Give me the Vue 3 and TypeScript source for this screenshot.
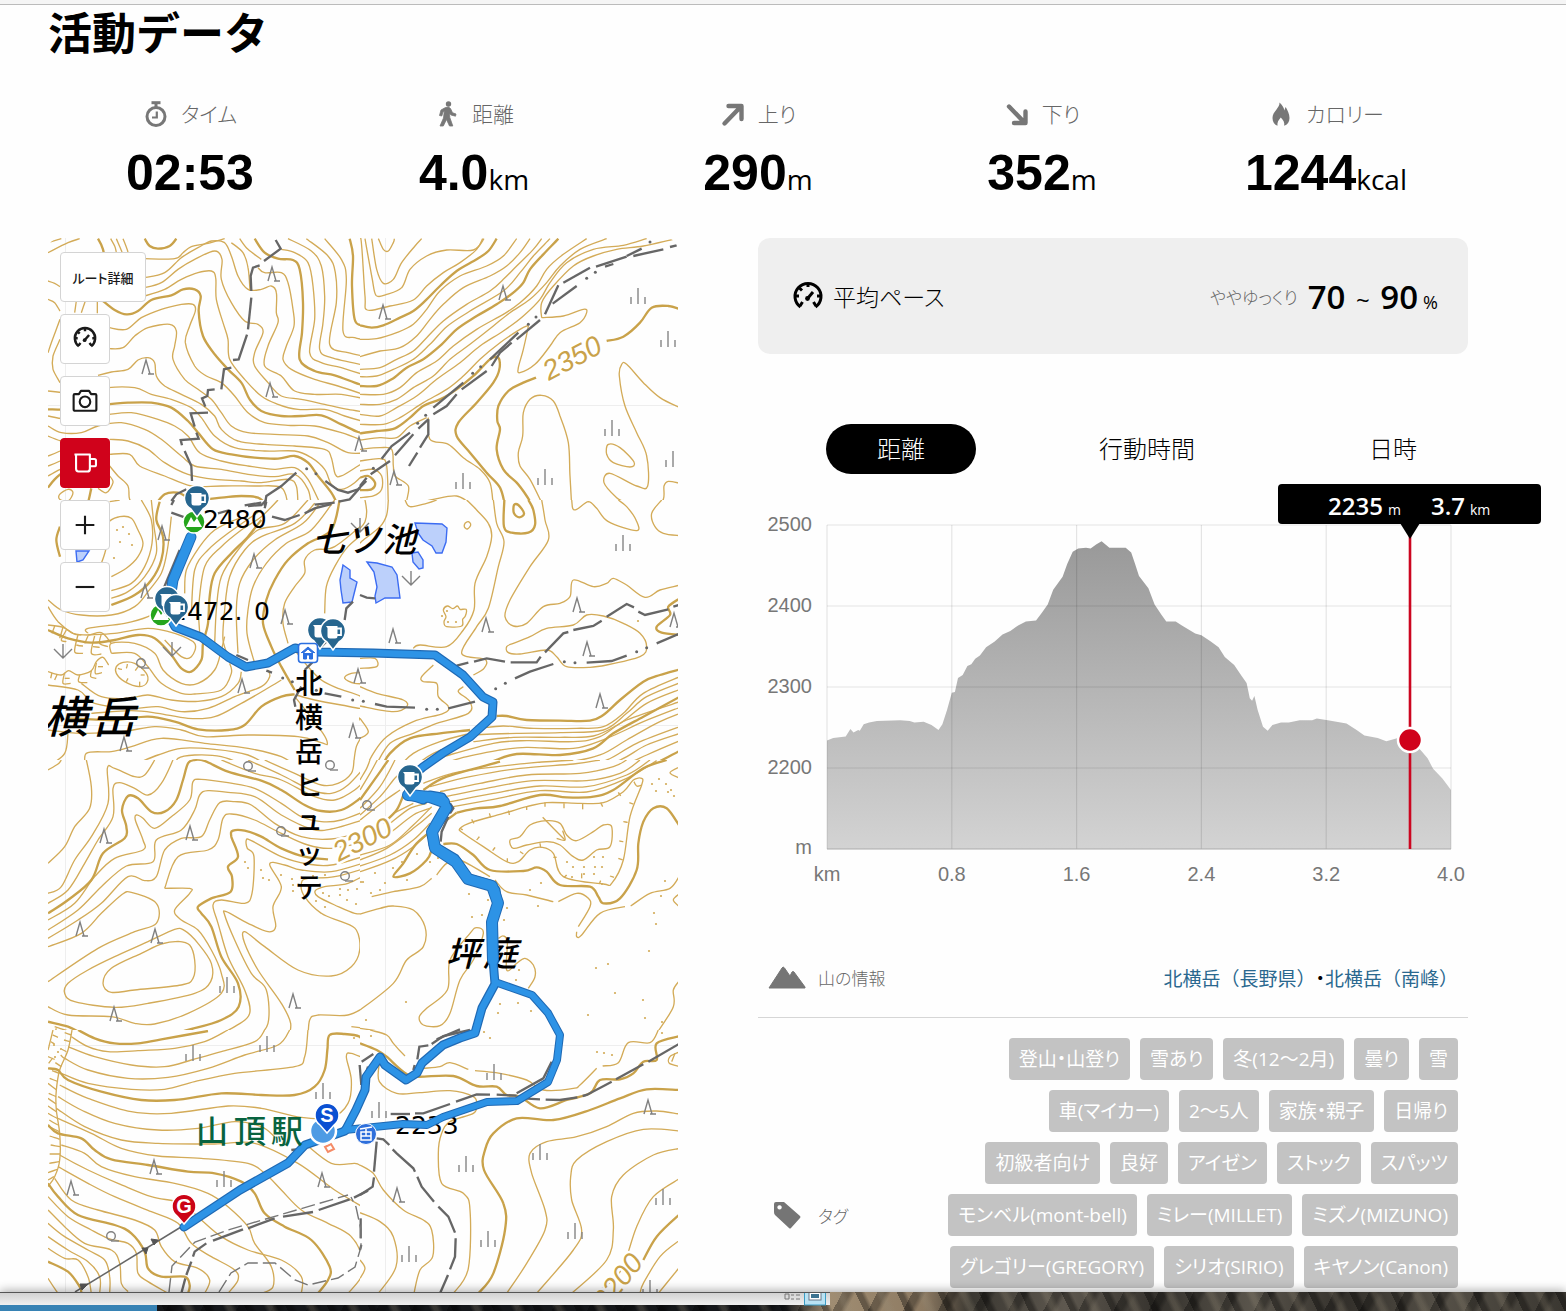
<script setup lang="ts">
import { ref } from 'vue'

interface Tile {
  x: number
  y: number
  w: number
  h: number
  bold: string[]
  thin: string[]
  trail: string[]
  dots: string
}

type Pt = [number, number]

function parse(s: string): Pt[] {
  return s.replace('z', '').trim().split(/\s+/).map((p) => p.split(',').map(Number) as Pt)
}

// Turns a point list into a smooth curve; a trailing "z" closes it.
function smooth(s: string): string {
  const closed = s.endsWith('z')
  const p = parse(s)
  const n = p.length
  const at = (i: number): Pt => (closed ? p[(i + n) % n] : p[Math.max(0, Math.min(n - 1, i))])
  let d = `M${p[0][0]} ${p[0][1]}`
  const last = closed ? n : n - 1
  for (let i = 0; i < last; i++) {
    const [a, b, c, e] = [at(i - 1), at(i), at(i + 1), at(i + 2)]
    const r = (v: number) => Math.round(v)
    d += `C${r(b[0] + (c[0] - a[0]) / 6)} ${r(b[1] + (c[1] - a[1]) / 6)} ${r(c[0] - (e[0] - b[0]) / 6)} ${r(c[1] - (e[1] - b[1]) / 6)} ${c[0]} ${c[1]}`
  }
  return closed ? d + 'Z' : d
}

// Map tiles: three drawing units per map pixel, origin in map pixels.
const tiles: Tile[] = [
  {
    x: 48, y: 236, w: 936, h: 792,
    bold: [
      '150,8 165,40 172,90', '165,195 200,222 235,235 270,225 310,192 370,178 405,160 440,160 458,180 452,225 465,300 500,355 540,400 580,440 605,490 640,525 700,540 760,540 820,538 880,565 930,588 960,590',
      '290,8 305,30 330,38 365,30 385,8',
      '620,8 650,50 690,68 735,72 755,100 765,200 762,290 755,370 800,405 860,418 920,440 960,452',
      '905,8 915,60 912,150 920,250 940,268 960,272',
      '0,520 70,520 150,508 240,500 310,500 370,515 420,555 450,590 495,640 550,655 620,665 690,668 740,660 780,680 810,720 850,770 870,810',
      '320,810 350,775 390,770 440,790 520,785 580,780 630,785 660,810',
      '0,755 20,730 40,712', '130,757 120,800 110,810',
    ],
    thin: [
      '188,8 200,30 205,48', '225,8 240,48', '205,8 222,48', '290,68 380,68 405,50 430,32 480,22 530,8',
      '290,125 350,110 400,65 450,35 490,15 530,20 550,60 570,120 600,160 640,160 670,150 685,170 685,230 690,260 660,330 650,390 700,420 740,465 800,475 880,475 960,490',
      '290,155 340,140 390,100 440,70 500,45 522,70 520,130 550,200 590,255 630,265 645,290 620,350 620,390 660,440 700,480 760,490 830,505 900,520 960,530',
      '290,180 350,160 400,130 450,110 490,105 503,125 505,190 525,260 540,310 545,370 590,430 640,480 690,505 750,520 830,520 890,540 960,560',
      '185,275 235,280 280,245 340,220 400,205 435,205 442,225 425,270 412,320 440,390 475,420 520,440 560,480 600,530 650,560 720,568 800,570 880,590 960,620',
      '185,338 225,335 260,300 300,275 365,265 385,285 380,330 375,370 410,430 450,460 490,490 520,530 550,570 600,590 680,595 780,600 840,620 900,650 960,650',
      '150,418 190,408 240,400 270,372 300,365 320,380 325,420 350,450 400,475 460,505 500,540 520,580 570,615 650,625 740,630 830,640 850,665 862,715 880,720 930,690 960,670',
      '0,465 50,470 100,472 180,455 260,455 310,475 370,490 430,515 460,545 500,600 560,635 650,645 740,645 790,665 830,700 850,745 880,760 920,740 960,700',
      '185,535 250,530 330,550 380,570 420,600 455,650 520,675 600,690 680,700 740,695 780,730 820,810',
      '0,570 40,590 100,590 150,570 220,560 290,580 340,610 400,660 440,690 520,700 600,715 680,722 740,715 780,760 790,810',
      '0,540 50,548 100,535', '0,600 40,615',
      '185,610 240,615 300,640 350,680 420,715 500,730 580,735 640,740 720,730 745,750 750,810',
      '185,655 245,655 275,690 350,720 430,750 520,750 620,750 700,755 720,810',
      '185,690 210,720 240,750 245,790 270,810',
      '630,95 650,110 700,110 720,140 735,220 738,270 715,330 705,370 730,400 800,430 870,450 960,480',
      '700,40 740,50 780,80 795,150 800,250 785,350 820,380 880,395 960,420',
      '720,8 790,45 820,90 830,180 825,260 815,340 850,365 960,390',
      '775,8 840,60 862,110 865,200 845,325 900,350 960,362',
      '830,8 880,70 895,130 885,285 920,305 960,312', '940,8 948,170 960,230',
      '550,20 585,50 600,95 606,165', '575,8 600,40 640,70', '0,20 40,8', '0,50 60,20 95,8',
      '0,135 20,142 36,152', '0,190 20,200 36,225', '36,310 15,360 15,400 36,440', '36,250 10,320 0,350',
      '85,195 80,230', '112,195 100,230', '148,195 148,232', '0,660 36,645', '0,690 36,675', '0,720 36,700',
      '35,775 60,760 75,770 60,795 35,790z', '150,757 175,770 195,740 185,720',
    ],
    trail: [
      '683,12 698,38 648,75', '635,88 615,95 608,120 610,165', '610,185 600,280', '597,296 572,370 555,372',
      '550,395 528,400 520,460', '500,460 480,462 478,480 462,487 472,512', '480,530 428,532 440,572',
      '445,590 452,608 398,612 402,628', '410,645 430,690 432,735', '415,760 385,775 370,795',
      '745,710 700,750 655,780 650,810', '832,735 870,762 900,770 930,760 955,735', '800,806 860,800', '872,797 905,790 936,755', '590,808 640,800',
    ],
    dots: '776,698 804,713',
  },
  {
    x: 360, y: 236, w: 960, h: 792,
    bold: [
      '0,268 35,275 70,268 120,245 160,225 200,190 240,150 290,105 350,70 385,45 410,8',
      '0,450 50,450 95,430 140,395 190,370 240,330 290,280 350,240 410,205 460,170 490,140 510,100 550,55 595,8',
      '0,592 50,585 105,577 150,545 190,510 240,490 290,460 340,420 390,370 415,365 418,400 400,440 350,500 295,560 290,600 330,650 380,710 420,755 435,810',
      '528,425 490,440 445,465 415,510 412,555 420,580 410,640 430,700 470,740 500,780 518,810',
      '740,315 790,302 840,260 875,215 925,210 960,220',
      '0,725 25,720 45,740 35,760 0,762', '455,810 470,804 485,812',
    ],
    thin: [
      '0,0 5,30 15,180 22,222 90,210 160,192 200,150 250,110 300,80 350,40 368,8',
      '15,8 35,120 48,178 80,175 125,155 150,100 200,60 260,42 340,42 372,8',
      '35,8 50,100 70,142 100,130 125,80 165,30 185,8',
      '55,8 70,40 85,45 100,20 103,8',
      '0,310 50,308 110,290 160,265 200,220 240,165 300,120 380,90 430,60 470,8',
      '0,362 60,345 120,335 170,300 210,250 250,205 310,155 390,120 440,90 480,50 510,8',
      '0,400 60,395 110,370 160,345 200,305 250,255 320,205 390,165 430,130 470,90 520,40 545,8',
      '0,422 50,420 100,400 160,370 210,325 260,272 330,225 430,165 480,110 520,60 570,8',
      '0,475 70,475 120,455 170,410 230,375 280,330 350,280 430,235 480,200 530,150 560,100 610,55 680,8',
      '0,505 60,505 110,490 160,455 220,420 270,370 330,325 400,270 450,230 510,190 560,140 600,90 660,40 740,8',
      '0,535 60,540 110,515 170,480 230,430 300,380 360,330 430,285 490,240 540,190 570,140 620,80 700,40 790,28 860,8',
      '0,565 70,565 120,545 190,500 260,460 310,420 360,370 420,320 480,280 505,268',
      '0,612 60,605 110,605 150,570 200,545',
      '545,245 545,200 580,150 640,90 700,60 770,40 850,30 940,10',
      '545,245 610,240 670,220 680,230 660,260 600,290 570,330 525,385 480,410 475,395 490,340 505,270',
      '205,545 210,610 265,625 310,665 360,700 390,740 400,810',
      '0,640 60,635 95,640 100,690 105,720 145,750 140,800 160,805 220,790 290,780 340,810',
      '0,675 60,668 80,690 85,810', '0,705 40,700 65,720 65,760 40,780 0,785',
      '635,810 630,720 625,620 600,540 580,495 545,478 510,490 490,530 488,600 475,650 480,690 510,730 550,810',
      '960,515 900,485 850,440 800,385 785,385 778,420 795,510 830,590 860,660 863,750 830,750 750,712 732,740 770,785 800,800 820,810',
      '745,625 780,635 822,678 810,693 760,680 740,655z',
      '660,810 685,797 705,810', '960,742 925,736 912,750 910,790 880,810',
    ],
    trail: [
      '0,750 20,725', '32,715 90,675', '105,658 160,595', '175,578 205,550', '220,535 260,510 290,475', '305,460 380,405', '395,390 420,350 455,320', '470,310 540,252',
      '65,668 95,630 150,590', '220,515 310,440', '390,370 475,290', '205,550 205,595 180,635', '172,650 147,690',
      '555,235 595,148', '578,203 650,150', '610,140 690,95', '708,92 800,62', '820,60 910,40', '930,33 950,28', '800,60 845,38', '735,92 760,84',
    ],
    dots: '173,562 197,538 338,412 362,392 505,265 528,243 680,127 706,109 870,18 40,697',
  },
  {
    x: 48, y: 500, w: 936, h: 780,
    bold: [
      '36,80 25,120 36,170', '335,5 325,60 345,110 340,180 310,240 260,285 190,315',
      '640,60 600,110 550,160 500,220 485,290 480,370 465,430 460,480 430,515 400,505 370,465 320,415 270,405 200,420 130,428 60,415 0,390',
      '875,0 850,90 780,130 720,180 680,240 655,300 645,370 670,440 700,500 740,570',
      '60,655 200,660 300,650 380,665 450,688 540,690 590,675 640,620 700,590 740,583',
      '410,810 430,783 465,783 520,800 545,810',
    ],
    thin: [
      '160,190 175,140 180,70 215,50 250,55 270,90 285,130 270,170 235,205 190,230', '185,5 215,0',
      '280,0 310,60 312,130 290,200 250,250 190,272', '310,0 318,80 325,160 290,230 240,275 190,295',
      '370,50 358,150 340,220 300,275 260,320 190,345 100,345 40,330 0,300',
      '0,320 30,365 75,400 100,405', '120,400 120,385 230,370 300,350 330,330',
      '120,405 200,400 300,385 380,400 440,430 430,470 400,470 350,420',
      '410,280 415,210 455,140 500,90 560,60 600,50', '430,340 440,210 480,150 540,100 640,30',
      '455,400 452,320 470,200 520,140 580,90 640,50 690,0',
      '500,430 505,330 520,230 570,150 630,90 710,70 780,0',
      '545,480 525,420 530,330 545,230 590,150 640,110 740,70 800,10',
      '570,460 565,330 575,250 615,180 680,120 765,70 815,10',
      '620,490 597,400 600,330 615,260 655,190 715,130 790,90 860,0',
      '720,430 705,370 710,310 740,260 770,220 770,180 800,150 860,140 960,60',
      '830,340 835,260 860,200 900,140 960,90',
      '190,460 190,430 260,430 320,460 345,510 400,550 450,550 500,510 520,450 530,410',
      '190,460 260,460 300,500 340,550 400,580 440,582 520,570 550,520 545,490',
      '100,550 160,590 240,595 300,585 370,600 450,604 520,590 570,550 580,515',
      '0,555 90,570 140,610 250,625 330,620 400,635 480,625 560,590 640,560 665,530 660,510',
      '130,640 250,632 330,640 420,655 500,650 580,610 650,570 700,540',
      '0,690 100,700 220,695 320,680 400,690 470,710 600,705 750,710 820,728 838,732 825,700 780,640 740,590',
      '115,810 115,760 190,755 250,740 340,715 470,730 600,745 700,770 760,810',
      '180,810 240,800 330,765 400,745 500,748 600,765 680,810',
      '380,810 390,775 440,765 520,770 600,800 620,810', '60,700 50,760 0,800',
      '205,500 225,487 260,490 295,520 298,545 275,560 230,545 205,520z',
      '740,450 780,500 820,540 870,565 940,590 948,612 940,625 880,615 800,600 745,585',
      '960,518 910,520 890,535 920,550 960,550', '960,650 935,655 950,690 925,740 915,810',
      '0,375 45,382 75,400 120,405 160,398 190,430', '45,382 35,415', '20,378 12,400', '90,404 80,455 105,460', '85,435 105,438', '120,408 110,430', '140,408 130,460 160,462', '135,440 155,442', '160,402 155,430 180,440', '55,390 40,420 55,425',
      '0,515 40,525 62,512 90,525 130,512 145,485 165,472 182,495', '50,518 45,550 68,550', '50,535 65,535', '95,525 92,545 118,548', '130,512 128,530 145,535', '145,488 142,520 162,518', '150,500 165,500', '12,518 8,535', '28,522 20,540',
      '238,492 235,505', '270,500 262,512', '290,525 278,525', '210,505 222,508', '235,545 240,535', '275,558 275,545',
    ],
    trail: [
      '370,15 378,0', '370,38 410,52', '510,40 545,30', '600,18 640,15 655,0', '655,5 650,25', '672,50 710,60 755,45', '770,40 800,25 850,12', '395,150 345,270',
      '890,360 895,325 915,305', '742,620 738,600 760,560', '770,510 790,490 800,480', '655,512 672,518', '565,465 600,480', '830,580 880,590', '820,440 835,425',
    ],
    dots: '704,534 733,545 805,571 914,600',
  },
  {
    x: 360, y: 500, w: 960, h: 780,
    bold: [
      '433,0 432,80 455,98 505,98 525,75 520,30 505,0', '462,15 475,15 492,40 478,52 462,40z',
      '410,648 440,648 500,660 600,662 690,662 730,645 780,600 850,545 900,525 960,508',
      '960,295 925,320 930,345 890,380 905,398 960,405',
      '290,810 380,790 470,762 600,765 700,745 760,700 850,650 960,590',
      '60,810 90,760 150,715 240,700 330,690', '850,810 960,752',
    ],
    thin: [
      '15,0 20,35 15,65 0,85', '85,0 80,45 60,80 10,120 0,130', '135,0 150,20 200,10 230,0',
      '320,0 350,30 385,70 395,110 380,170 345,250 342,330 310,390 260,440 180,435 160,445',
      '400,0 410,70 432,125 415,200 385,325 350,380 305,460 375,478 372,505 340,525',
      '545,0 555,60 565,120 510,200 450,300 435,350 460,378 500,370 550,320 600,310 630,290 640,240 700,260 740,250 760,235 800,255 855,292 900,270 960,255',
      '635,0 638,25 650,28 685,5 710,25 745,65 830,92 828,60 800,20 775,0',
      '905,0 875,40 885,80 910,100 960,107', '315,70 325,65 332,75 322,87 313,80z',
      '250,330 262,318 278,326 292,318 300,328 318,328 316,348 308,358 305,378 260,380 252,365 258,350z',
      '440,440 460,430 510,410 560,385 640,375 680,345 730,348 790,370 840,400 860,440 840,470 740,495 690,502 620,500 590,470 560,450 480,462 445,458z',
      '0,475 45,475 50,500 0,505', '220,495 185,530 190,545 230,550 235,590 265,620 250,640 160,665 80,710 40,760 15,810',
      '310,560 295,575 330,605 325,640 230,670 160,700 90,730 40,810', '0,560 50,580 130,600 140,620 100,635 0,618', '0,655 25,695 0,715',
      '360,685 430,678 520,685 650,685 730,680 790,640 850,580 960,530',
      '330,705 470,700 600,698 730,690 800,640 860,590 960,548',
      '340,725 460,712 600,712 700,708 780,670 860,610 960,568',
      '250,770 400,730 500,722 640,725 720,710 800,660 960,605',
      '200,810 300,775 420,750 500,742 640,745 740,715 850,665 960,622',
      '400,810 500,785 620,785 720,765 800,720 900,665 960,640',
      '520,810 640,805 740,780 830,730 960,680', '680,810 780,780 860,735 960,700', '760,810 860,765 960,722', '900,810 960,785',
      '110,810 160,760 240,725 330,700', '150,810 220,760 330,720',
    ],
    trail: [
      '290,497 325,488', '342,485 380,475 435,485', '452,487 530,487 542,470', '555,457 610,400 625,396', '640,390 700,378 725,362', '740,350 800,312 822,322', '835,335 855,345 925,328', '940,320 960,314',
      '465,535 510,515 580,492', '680,488 755,483 800,467', '890,430 960,400', '45,612 80,620 165,623', '265,625 345,605', '0,285 20,293 45,295',
    ],
    dots: '407,566 436,550 613,485 645,488 830,455 860,443 200,628 232,628 10,604',
  },
  {
    x: 48, y: 760, w: 936, h: 810,
    bold: [
      '0,460 60,420 130,360 165,280 230,235 235,200 222,150 240,108 270,115 310,155 350,155 385,120 405,60 420,10 440,0 470,3 540,35 640,62 700,90 770,135 820,153 880,150 930,120 960,90',
      '840,298 770,290 700,265 640,230 590,212 555,212 550,230 570,290 540,320 552,350 548,395 490,415 450,440 460,460 490,500 520,590 570,670 572,740 520,780 420,810 300,838',
      '0,785 60,800 130,830 240,840 300,838', '840,840 850,822 930,825',
    ],
    thin: [
      '115,0 130,80 125,145 80,200 50,260 0,310',
      '0,400 40,380 80,300 130,230 180,130 178,25 200,25 260,50 290,45 320,0',
      '0,430 60,390 110,310 150,240 195,170 195,85 215,68 260,85 300,105 340,70 375,0',
      '0,480 80,430 140,350 200,295 285,270 285,240 262,180 265,165 285,175 320,205 370,170 425,120 435,65 460,58 540,68 620,85 700,130 760,170 820,185 880,180 960,150',
      '0,510 90,450 160,380 235,318 315,305 325,240 400,210 440,150 455,105 480,92 540,97 620,110 700,165 790,207 850,207 960,175',
      '0,535 90,480 160,430 240,350 290,362 325,350 350,270 400,235 460,230 485,180 515,128 560,125 610,135 680,190 760,230 850,237 960,210',
      '0,560 100,520 160,460 220,405 250,397 325,430 325,490 260,515 150,565 0,665',
      '350,385 390,290 480,270 510,240 525,175 550,162 620,180 700,220 780,255 850,265 960,245',
      '350,385 425,385 425,400 380,450 400,480 450,510 490,570 520,640 520,700 420,760 320,792 260,790 190,770 60,765 0,740',
      '380,508 410,512 450,550 490,610 488,665 440,700 300,730 200,742 80,725 50,700 60,670 120,630 200,590 300,545z',
      '390,544 425,555 440,600 435,655 400,675 260,690 190,697 165,670 190,625 280,580 340,552z',
      '960,285 850,315 780,312 700,290 610,242 595,240 598,265 618,290 612,400 590,430 520,420 495,435 510,490 540,590 590,690 605,760 560,800 480,840',
      '960,305 850,335 760,330 710,315 665,312 700,380 675,440 683,500 660,515 600,490 535,455 530,465 560,540 610,640 655,690 660,790 620,840',
      '720,840 728,790 700,730 630,630 590,550 590,515 650,560 750,630 850,648 910,620 935,570 925,510 880,485 820,460 770,410 760,370 780,355 860,350 960,322',
      '960,460 920,460 860,435 810,410 802,392 830,380 900,370 960,340',
      '780,840 785,780 810,765 900,765 960,735', '910,800 960,806', '0,30 30,12 40,0',
      '520,0 620,40 700,60 800,110 860,120 920,90 960,50', '600,0 700,45 790,90 850,100 900,75 960,10', '650,0 740,40 820,75 870,70 910,40 918,0',
      '20,800 70,815', '15,840 25,805', '70,840 66,812', '35,810 38,840', '50,812 48,835',
    ],
    trail: [],
    dots: '',
  },
  {
    x: 360, y: 760, w: 960, h: 810,
    bold: [
      '0,120 50,50 85,0', '70,190 110,150 130,105', '190,90 260,50 420,5',
      '290,158 350,145 420,138 540,105 620,112 700,110 760,90 850,25 920,0',
      '290,158 260,180 230,200 170,250 130,310 100,350 150,340 200,300 215,270',
      '250,252 290,252 340,285 390,330 490,333 530,322 560,335 600,375 690,380 715,410 730,430 780,415 830,330 835,250 850,185 880,145 920,145 960,200',
    ],
    thin: [
      '0,60 20,25 30,0', '0,90 30,40 52,0', '0,145 60,80 105,0', '0,165 60,110 100,60 120,40', '0,180 70,125 120,90', '100,160 160,130',
      '0,285 90,255 160,195 215,140', '0,300 80,265 160,205 215,160', '0,318 90,285 160,240 210,190', '0,335 90,302 160,260 205,220', '90,190 150,145 200,130', '95,215 160,165 210,145',
      '190,70 300,35 500,10 640,0', '210,80 330,50 480,25 640,12 720,0', '240,95 360,70 500,45 660,40 760,20 800,0', '255,110 380,85 520,62 680,62 780,40 840,0', '270,125 400,100 540,78 680,80 800,45 870,0', '280,140 400,118 540,92 680,96 800,55 890,2',
      '300,205 340,185 430,160 500,140 560,128 660,130 730,128 790,95 820,60 845,55 845,75 810,170 790,300 755,370 730,372 610,350 580,280 545,262 510,270 475,305 440,305 370,260 310,220z',
      '822,65 830,78 845,75', '450,240 480,230 510,195 560,182 600,190 620,225 650,242 700,215 730,195 755,200 750,260 710,270 670,300 640,290 600,255 560,245 500,255 460,265z',
      '548,172 615,240', '590,235 615,240 608,212',
      '335,178 342,190', '388,160 392,172', '445,152 448,165', '500,138 500,150', '555,127 555,140', '612,130 612,145', '668,130 668,148', '722,128 728,140', '775,97 782,108', '808,128 820,132', '790,185 803,187', '778,243 790,245', '775,295 788,300', '750,348 762,352', '722,362 718,372', '665,340 665,355', '620,345 612,352', '590,292 580,292', '540,250 542,262', '480,275 490,282', '442,295 442,305', '405,262 398,272', '358,230 350,240', '308,210 300,205',
      '35,410 100,395 180,380 215,355', '230,345 260,310 300,300 390,350', '405,360 440,395 500,405 580,425',
      '595,425 650,400 685,415 690,440 655,500', '650,515 650,530 665,525 720,460 795,440', '812,438 870,400 930,385 960,345',
      '0,462 60,445 100,438 160,450 195,500 190,560 140,600 100,670 0,750',
      '240,797 270,760 300,660 340,600 370,520 350,503 330,520 270,600 262,690 200,745 178,770 190,795z',
      '415,535 430,528 442,545 440,630 470,610 495,595 520,615 525,650 505,685', '960,400 940,420 960,442', '960,20 930,38 960,55',
      '960,660 940,690 940,740 890,820', '0,805 60,815 100,838',
    ],
    trail: ['265,170 245,215 242,245', '270,130 280,145 270,160', '230,838 300,808', '318,815 340,820'],
    dots: '',
  },
  {
    x: 48, y: 1030, w: 936, h: 800,
    bold: [
      '90,0 140,25 200,40 270,40 340,28 480,3',
      '0,115 30,120 60,150 160,185 280,210 380,210 520,190 640,195 740,195 800,170 830,120 838,60 845,15 890,12 935,20 945,45 960,50',
      '0,285 30,310 100,325 140,360 190,388 300,405 420,425 500,430 580,455 620,490 650,550 710,590 790,630 845,710 840,750 810,790',
      '0,460 30,500 90,555 200,585 250,610 290,665 300,715 340,740 410,740 425,765 420,790',
      '0,695 60,725 95,770 100,790',
    ],
    thin: [
      '70,20 120,50 180,65 270,62 380,55 470,35 540,0', '60,50 140,80 250,105 350,110 430,90 520,65 620,35 650,0',
      '50,85 120,120 240,145 360,142 480,115 590,75 690,45 725,0', '40,130 120,160 250,178 350,178 440,155 560,130 740,110 770,80 780,0',
      '35,165 120,205 250,245 370,250 540,228 640,235 760,262 850,262 900,220 910,150 895,80 910,70 960,90',
      '30,200 100,240 200,280 330,300 450,295 560,275 640,290 680,320', '25,235 110,290 220,330 330,340 500,342 620,340 750,400 860,480 960,540',
      '30,265 130,310 220,355 330,378 460,385 600,400 650,430 700,480 760,540 840,580 910,620 945,690 940,740 900,790',
      '40,345 110,370 160,410 260,440 380,460 480,490 540,530 600,590 620,640 670,710 675,770 640,790',
      '35,375 120,420 210,460 310,500 400,520 460,570 520,620 600,660 700,690 760,740 760,790',
      '30,410 120,460 200,500 310,545 390,580 430,640 490,680 560,720 570,750 540,790',
      '20,445 70,510 150,540 260,570 320,600 340,650 380,695 450,715 485,750 470,790',
      '0,500 60,560 130,600 180,625 240,640 265,670 270,730 300,755 360,790',
      '0,540 50,590 110,640 190,660 215,700 220,760 240,785', '0,580 50,620 120,660 170,690 185,740 185,790',
      '0,620 60,660 120,695 155,740 155,790', '0,655 50,685 90,690 120,740 130,790', '0,745 30,790', '770,340 850,400 920,400 936,406',
      '72,0 60,60 35,120 25,180 25,240 35,310 35,390 20,440 0,470', '15,0 5,40 0,60',
      '55,65 42,58', '48,85 38,75', '40,110 22,98', '35,130 12,122', '30,155 5,145', '26,180 0,160', '24,200 2,190', '24,222 0,205', '25,245 0,228', '28,265 0,250', '30,285 4,270', '34,305 8,292', '35,328 5,318', '36,350 8,345', '36,372 5,372', '34,395 4,400', '28,418 0,428', '18,440 0,450', '70,15 50,8', '66,35 48,30', '14,15 30,22', '8,35 20,42', '0,80 20,88', '2,100 14,84',
    ],
    trail: ['950,145 960,110', '935,105 940,165', '730,360 745,358', '400,790 412,745', '415,735 430,695', '435,680 440,665 475,640', '495,632 585,598', '600,595 680,565', '705,560 795,546', '812,540 905,508', '918,503 960,482'],
    dots: '',
  },
  {
    x: 360, y: 1030, w: 960, h: 800,
    bold: [
      '0,40 50,60 80,80 130,125 170,140 280,138 350,168 410,170 440,195 480,200 540,235 620,210 690,190 720,150 780,148 820,130 850,95 890,90 890,40 960,18',
      '960,180 860,178 780,205 690,240 580,270 470,265 400,310 375,360 372,420 430,520 435,600 400,730 355,790',
      '850,690 890,620 960,552',
    ],
    thin: [
      '30,0 80,15 100,40 135,78', '190,115 240,110 270,98 325,118', '345,122 420,130 500,150 550,180 640,175 660,165 710,115', '728,108 775,98 805,38 870,38 895,0',
      '58,100 58,155 110,190 180,188 270,182 340,200 350,225 340,250 270,275 245,310 235,370 245,460 310,490 330,540 325,715 280,790',
      '960,252 890,243 820,250 740,290 650,320 560,335 510,370 515,430 555,540 555,600 500,700 440,790',
      '960,303 850,298 740,335 650,390 632,440 635,510 665,600 640,660 530,790',
      '960,355 880,375 790,435 755,500 760,600 740,690 635,790', '960,445 880,500 830,590 800,680 770,740 705,790',
      '960,630 900,680 850,760 840,790', '960,710 895,790',
      '0,405 40,430 70,480 130,540 190,570 215,600 218,680 180,720 162,790', '0,548 60,575 100,620 108,710 55,790', '0,690 15,715 0,745', '960,65 930,80 928,100 960,110', '945,70 935,95',
    ],
    trail: [
      '5,95 40,72', '92,252 150,252', '165,250 190,250 270,222', '288,215 350,193 390,194', '410,194 470,197', '490,205 540,208', '557,209 600,210 652,202', '668,198 680,195 755,155', '768,148 850,103', '865,95 960,40',
      '160,120 164,105', '172,88 178,50 205,46', '215,42 250,18 330,0', '470,190 550,145 575,95', '50,325 70,328 88,345', '98,358 110,370 160,415 165,425', '172,440 185,470 222,515', '235,530 265,560 285,608', '287,625 285,680 270,718', '264,735 240,790', '50,335 42,425', '42,442 38,470 0,495', '2,565 2,625', '4,645 0,660',
    ],
    dots: '',
  },
]

const ponds: string[] = [
  'M76 551L89 551L83 560L77 562Z',
  'M343 565L350 570L350 578L357 582L352 602L343 603L341 590L340 580Z',
  'M367 562L377 563L392 567L397 575L400 598L385 598L376 603L375 596L377 587L374 572Z',
  'M415 523L442 524L447 528L446 542L442 553L436 553L432 546L423 540L418 533Z',
  'M412 553L418 552L423 560L423 568L419 569L413 562Z',
]

const rubble: Pt[] = parse(
  '245,862 248,868 261,870 263,878 269,880 281,875 292,879 293,885 293,891 313,876 325,875 323,893 329,896 340,889 348,890 357,889 361,882 340,895 347,900 356,904 316,901 325,907 371,893 363,882 380,890 375,873 385,883 393,868 402,862 407,880 417,854 430,862 438,858 469,894 488,900 507,908 538,906 530,890 541,883 472,917 482,915 504,920 567,862 573,867 584,867 594,857 602,867 603,857 594,874 584,874 602,884 572,877 595,867 652,784 659,779 666,784 671,790 674,796 668,792 656,791 665,881 661,896 654,913 656,924 649,951 608,964 596,968 615,993 588,1015 643,1000 645,1018 500,1004 498,1013 516,980 519,970 518,1003 531,1011 406,1002 366,1020 354,1038 484,1032 490,1038 597,1052 604,1053 612,1055 662,1033 54,1045 58,1052 55,1057 61,1049 117,530 123,527 129,534 120,542 132,545 114,558 638,621 442,616 448,622 456,622 447,611 662,1022 371,1036',
)

const conifers: Pt[] = parse(
  '273,274 147,367 271,390 360,444 384,312 504,293 395,478 163,533 146,591 255,561 286,617 243,686 359,676 354,731 125,744 394,636 487,625 578,605 588,649 601,701 675,620 105,836 191,833 81,929 156,936 115,1014 294,1001 72,1188 155,1167 323,1180 649,1107 398,1195',
)
const grasses: Pt[] = parse(
  '638,296 668,339 612,428 673,459 463,481 545,477 623,543 227,985 193,1053 267,1044 323,1091 224,1179 494,1072 379,1110 466,1164 540,1152 663,1197 575,1231 488,1239 409,1254 650,1288',
)
const broadleaf: Pt[] = parse('141,663 248,766 330,765 281,831 345,876 367,805 111,1236')
const dwarfPines: Pt[] = parse('63,652 172,650 360,526 411,579')

const route =
  'M184 1227L240 1190L288 1163L305 1145L345 1131L356 1110L365 1090L366 1077L380 1057L385 1065L406 1080L417 1073L422 1063L443 1045L460 1038L475 1033L482 1008L495 984L492 947L492 920L498 903L496 890L490 884L468 878L455 858L433 845L432 830L448 808L442 797L430 795L423 800L408 795L410 778L423 767L443 753L470 737L492 717L493 702L483 697L463 675L435 655L373 653L315 652L295 648L268 663L246 667L228 657L201 637L175 627L165 608'
const loop =
  'M495 982L532 995L548 1013L560 1035L557 1060L548 1082L517 1101L487 1102L443 1117L427 1125L403 1124L345 1130'
const ascent = 'M169 606L173 580L191 537'
const widened = 'M408 795L430 797L444 802M446 808L432 832L435 848L456 862L468 879L492 886L498 903L492 922L493 960'

const cups: Pt[] = [[197, 499], [167, 600], [176, 608], [320, 631], [333, 632], [410, 778]]
const peaks: Pt[] = [[194, 522], [161, 615]]
const hut = ['北', '横', '岳', 'ヒ', 'ュ', 'ッ', 'テ']

// Elevation profile: distance in km, height in metres.
const profile: Pt[] = parse(
  '0,2234 .04,2237 .12,2239 .15,2248 .17,2244 .2,2247 .21,2246 .235,2254 .27,2256 .32,2258 .47,2259 .53,2258 .56,2256 .62,2257 .67,2253 .715,2247 .74,2254 .77,2272 .8,2293 .82,2294 .84,2311 .87,2315 .9,2326 .925,2328 .95,2335 .98,2339 1.02,2349 1.075,2356 1.125,2365 1.175,2369 1.225,2376 1.275,2381 1.34,2382 1.375,2391 1.415,2402 1.45,2420 1.51,2436 1.54,2452 1.575,2467 1.61,2471 1.66,2472 1.69,2471 1.725,2476 1.76,2480 1.81,2472 1.915,2472 1.95,2466 1.975,2452 2,2437 2.06,2422 2.1,2402 2.145,2389 2.175,2381 2.235,2381 2.275,2376 2.36,2366 2.4,2364 2.46,2356 2.51,2349 2.55,2337 2.61,2327 2.66,2313 2.69,2305 2.71,2286 2.725,2283 2.74,2289 2.76,2272 2.795,2251 2.825,2246 2.855,2253 2.91,2256 2.96,2256 3.03,2259 3.11,2259 3.14,2261 3.21,2259 3.33,2255 3.395,2247 3.445,2240 3.53,2237 3.585,2233 3.66,2237 3.74,2235 3.81,2221 3.85,2212 3.885,2199 3.945,2187 4,2173',
)
const px = (km: number) => 69 + (km * 624) / 4
const py = (m: number) => 51 + (2500 - m) * 0.81
const area = 'M69 375' + profile.map(([k, m]) => `L${px(k).toFixed(1)} ${py(m).toFixed(1)}`).join('') + 'L693 375Z'
const yTicks = [2500, 2400, 2300, 2200]
const xTicks = ['0.8', '1.6', '2.4', '3.2', '4.0']

const tabs = ['距離', '行動時間', '日時']
const active = ref(0)

const stats = [
  { icon: 'time', label: 'タイム', value: '02:53', unit: '' },
  { icon: 'walk', label: '距離', value: '4.0', unit: 'km' },
  { icon: 'up', label: '上り', value: '290', unit: 'm' },
  { icon: 'down', label: '下り', value: '352', unit: 'm' },
  { icon: 'fire', label: 'カロリー', value: '1244', unit: 'kcal' },
]

const tags = [
  '登山・山登り', '雪あり', '冬(12〜2月)', '曇り', '雪', '車(マイカー)', '2〜5人', '家族・親子', '日帰り',
  '初級者向け', '良好', 'アイゼン', 'ストック', 'スパッツ', 'モンベル(mont-bell)', 'ミレー(MILLET)', 'ミズノ(MIZUNO)',
  'グレゴリー(GREGORY)', 'シリオ(SIRIO)', 'キヤノン(Canon)',
]
</script>

<template>
  <div class="page">
    <div class="topbar"></div>
    <main class="content">
      <h1>活動データ</h1>
      <dl class="stats">
        <div v-for="s in stats" :key="s.label" class="stat">
          <dt>
            <svg class="stat-icon" viewBox="0 0 26 26" aria-hidden="true">
              <g v-if="s.icon === 'time'" fill="none" stroke="#777">
                <circle cx="13" cy="15.500" r="9" stroke-width="3" />
                <path d="M8.500 1.700H17.500" stroke-width="3" />
                <path d="M13 3V6" stroke-width="3" />
                <path d="M13.800 10.500V16.500H9" stroke-width="2.200" />
              </g>
              <g v-else-if="s.icon === 'walk'" fill="#777">
                <circle cx="14.500" cy="3" r="2.700" />
                <path d="M11.500 6.500L7 9L5.500 14.500L7.800 15L9 11L10.300 10.200L9.500 17L6 25H9.300L12.500 18.500L15.500 25H18.800L15.800 16.500L15.500 12L17 14L21.500 15.200L22 13L18.500 11.700L16.500 7.500L14.500 6Z" stroke="#777" stroke-width=".8" stroke-linejoin="round" />
              </g>
              <path v-else-if="s.icon === 'up'" d="M4.500 22.500L20.500 6M8.500 5H21.500V18" fill="none" stroke="#777" stroke-width="4.400" stroke-linejoin="round" stroke-linecap="round" />
              <path v-else-if="s.icon === 'down'" d="M5 5.500L20.500 21.500M10 22H21.500V10.500" fill="none" stroke="#777" stroke-width="4.400" stroke-linejoin="round" stroke-linecap="round" />
              <path v-else d="M11.500 1.500C12 7 4.500 10.500 4.500 17C4.500 21 6.500 23.800 9.500 24.800C9 21.500 10.500 19 12.800 16.500C15.300 19 16.800 21.500 16.200 24.800C19.500 23.800 21.500 21 21.500 17C21.500 12.500 19.500 9.500 17.700 6C17 7.200 16.700 8.300 16.500 9.500C15.800 6.500 14 3.500 11.500 1.500Z" fill="#777" />
            </svg>
            {{ s.label }}
          </dt>
          <dd>{{ s.value }}<small v-if="s.unit">{{ s.unit }}</small></dd>
        </div>
      </dl>

      <div class="columns">
        <section class="map" aria-label="地図">
          <svg class="map-canvas" viewBox="48 238 630 1054" preserveAspectRatio="xMidYMin slice">
            <defs>
              <clipPath v-for="(t, i) in tiles" :id="'tile' + i" :key="i"><rect :width="t.w" :height="t.h" /></clipPath>
              <g id="conifer" fill="none" stroke="#808080" stroke-width="1.400"><path d="M-5 7L-1 -7L3 7M1 7H7" /></g>
              <g id="grass" stroke="#858585" stroke-width="1.400"><path d="M-7 1V8M0 -8V8M7 1V8" /></g>
              <g id="broadleaf" fill="none" stroke="#808080" stroke-width="1.400"><circle r="4.300" /><path d="M0 5H8" /></g>
              <g id="dwarf" fill="none" stroke="#808080" stroke-width="1.400"><path d="M0 -8V6M-9 -3L0 6L9 -3" /></g>
              <g id="cup-pin">
                <path d="M0 18L-6 10A12.500 12.500 0 1 1 6 10Z" fill="#27668f" stroke="#fff" stroke-width="1.500" />
                <path d="M-7 -6H4.500V4Q4.500 6.500 2 6.500H-3Q-5.500 6.500 -5.500 4V-4Z" fill="#fff" />
                <path d="M4 -3.500H8V3H4" fill="none" stroke="#fff" stroke-width="1.800" />
              </g>
              <g id="peak-pin">
                <circle r="11" fill="#25a51c" stroke="#fff" stroke-width="1.500" />
                <path d="M-8 5L-3 -5L0 0L3 -4L8 5Z" fill="#fff" />
              </g>
            </defs>
            <rect x="48" y="238" width="630" height="1054" fill="#fefefe" />
            <path d="M65.500 238V1292M385.500 238V1292M48 405.500H678M48 725.500H678M48 1045.500H678" stroke="#eee" fill="none" />
            <g v-for="(t, n) in tiles" :key="n" :transform="`translate(${t.x} ${t.y}) scale(0.33333)`" :clip-path="`url(#tile${n})`" fill="none">
              <path v-for="(c, i) in t.thin" :key="'t' + i" :d="smooth(c)" class="thin" />
              <path v-for="(c, i) in t.bold" :key="'b' + i" :d="smooth(c)" class="bold" />
            </g>
            <g fill="#d3ab58"><circle v-for="([x, y], i) in rubble" :key="i" :cx="x" :cy="y" r="1.100" /></g>
            <g fill="#bcd0fb" stroke="#3c6cf2" stroke-width="1.400"><path v-for="p in ponds" :key="p" :d="p" /></g>
            <g v-for="t in tiles" :key="`p${t.x}-${t.y}`" :transform="`translate(${t.x} ${t.y}) scale(0.33333)`">
              <polyline v-for="(c, i) in t.trail" :key="i" :points="c" class="trail" />
              <template v-if="t.dots">
                <circle v-for="([x, y], i) in parse(t.dots)" :key="'d' + i" :cx="x" :cy="y" r="4.500" fill="#666" />
              </template>
            </g>
            <path d="M75 1292L181 1227" stroke="#666" stroke-width="1.500" />
            <path d="M151 1239L158 1240L154 1245ZM142 1248L148 1248L146 1254ZM80 1284L88 1284L82 1290Z" fill="#555" stroke="#555" />
            <g fill="none" stroke="#777" stroke-width="1.400" stroke-dasharray="14 5">
              <path d="M169 1292L172 1266L195 1242L228 1230L348 1195" />
              <path d="M219 1292L231 1273L248 1263L275 1263L295 1280L308 1285L338 1278L355 1267L361 1247L361 1230L356 1207L351 1197" />
            </g>
            <use v-for="([x, y], i) in conifers" :key="'c' + i" href="#conifer" :x="x" :y="y" />
            <use v-for="([x, y], i) in grasses" :key="'g' + i" href="#grass" :x="x" :y="y" />
            <use v-for="([x, y], i) in broadleaf" :key="'l' + i" href="#broadleaf" :x="x" :y="y" />
            <use v-for="([x, y], i) in dwarfPines" :key="'w' + i" href="#dwarf" :x="x" :y="y" />

            <g class="contour-label">
              <text transform="translate(549 381) rotate(-28)">2350</text>
              <text transform="translate(339 862) rotate(-27)">2300</text>
              <text transform="translate(606 1312) rotate(-52)">2200</text>
            </g>
            <g class="height-label">
              <text x="203" y="528">2480</text>
              <text x="171" y="620">2472.</text>
              <text x="254" y="620">0</text>
              <text x="395" y="1134">2233</text>
            </g>
            <g class="place">
              <text x="312" y="552">七</text><text x="346" y="552">ツ</text><text x="382" y="552">池</text>
              <text x="446" y="966">坪</text><text x="483" y="966">庭</text>
              <text class="big" x="44" y="733">横</text><text class="big" x="92" y="733">岳</text>
            </g>
            <g class="hut"><text v-for="(c, i) in hut" :key="i" x="309" :y="694 + i * 34">{{ c }}</text></g>

            <g fill="none" stroke-linejoin="round" stroke-linecap="round">
              <g stroke="#1f69b4">
                <path :d="route" stroke-width="9" /><path :d="loop" stroke-width="8" />
                <path :d="ascent" stroke-width="11" /><path :d="widened" stroke-width="12" />
              </g>
              <g stroke="#2d93e6">
                <path :d="route" stroke-width="6.600" /><path :d="loop" stroke-width="6" />
                <path :d="ascent" stroke-width="9" /><path :d="widened" stroke-width="10" />
              </g>
            </g>
            <g class="station"><text x="196" y="1143">山</text><text x="234" y="1143">頂</text><text x="271" y="1143">駅</text></g>

            <use v-for="([x, y], i) in peaks" :key="'k' + i" href="#peak-pin" :x="x" :y="y" />
            <use v-for="([x, y], i) in cups" :key="'u' + i" href="#cup-pin" :x="x" :y="y" />
            <g transform="translate(308 653)">
              <rect x="-9.500" y="-9.500" width="19" height="19" rx="3" fill="#fff" stroke="#2b6fe0" stroke-width="1.600" />
              <path d="M-7 0L0 -6L7 0M-4.500 0V6H-1.500V2H1.500V6H4.500V0L0 -4Z" fill="#2b6fe0" stroke="#2b6fe0" />
            </g>
            <path d="M325 1147L331 1144L334 1149L328 1152Z" fill="none" stroke="#f58b66" stroke-width="2" />
            <circle cx="323" cy="1131" r="13" fill="#4e9be4" stroke="#fff" stroke-width="2.500" />
            <g transform="translate(366 1134)">
              <circle r="10.500" fill="#2e6fdb" stroke="#fff" stroke-width="1" />
              <path d="M-6 -5L6 -7M0 -6V-2M-5 -2H5V6H-5ZM-5 2H5M0 -2V2" fill="none" stroke="#fff" stroke-width="1.500" />
            </g>
            <g class="pin-text">
              <path d="M327 1133L320 1125A12 12 0 1 1 334 1125Z" fill="#0b50d2" stroke="#fff" stroke-width="1.500" />
              <text x="327" y="1122">S</text>
              <path d="M184 1224L177 1216A12 12 0 1 1 191 1216Z" fill="#cb0416" stroke="#fff" stroke-width="1.500" />
              <text x="184" y="1213">G</text>
            </g>
          </svg>

          <div class="controls">
            <button type="button" class="wide">ルート詳細</button>
            <button type="button" aria-label="ペース">
              <svg viewBox="0 0 32 32" class="gauge"><path d="M8.500 25A12.500 12.500 0 1 1 23.500 25" /><path d="M8 24L10.500 21M24 24L21.500 21M3.500 15H7M25 15H28.500M7.500 7.500L9.500 9.500M16 3V6.500" /><path d="M16 17L21 11" /><circle cx="15.500" cy="17.500" r="2.300" /></svg>
            </button>
            <button type="button" aria-label="写真">
              <svg viewBox="0 0 32 32" class="line"><path d="M2 9Q2 7.500 3.500 7.500H8.500L11 3.500H21L23.500 7.500H28.500Q30 7.500 30 9V26Q30 28 28 28H4Q2 28 2 26Z" /><circle cx="16" cy="17" r="6.500" /></svg>
            </button>
            <button type="button" class="on" aria-label="休憩">
              <svg viewBox="0 0 32 32" class="line"><path d="M3 5.500H22V23Q22 26.500 19 26.500H8Q5 26.500 5 23V5.500M22 11H27.500Q29.500 11 29.500 13V18Q29.500 20 27.500 20H22" /></svg>
            </button>
            <button type="button" aria-label="拡大"><svg viewBox="0 0 32 32" class="line"><path d="M4.500 16H27.500M16 4.500V27.500" /></svg></button>
            <button type="button" aria-label="縮小"><svg viewBox="0 0 32 32" class="line"><path d="M4.500 16H27.500" /></svg></button>
          </div>
        </section>

        <section class="side">
          <div class="pace">
            <svg viewBox="0 0 32 32" class="gauge"><path d="M8.500 27A13 13 0 1 1 23.500 27" /><path d="M8 26L10.500 22M24 26L21.500 22M3.500 16H7M25 16H28.500M7.500 8L10 10.500M16 3V7" /><path d="M16 18L21 12" /><circle cx="15.500" cy="18.500" r="2.400" /></svg>
            <span class="pace-name">平均ペース</span>
            <span class="pace-note">ややゆっくり</span>
            <span class="pace-value">70 <i>~</i> 90<small>%</small></span>
          </div>

          <div class="tabs" role="tablist">
            <button v-for="(t, i) in tabs" :key="t" type="button" role="tab" :aria-selected="active === i" :class="{ selected: active === i }" @click="active = i">{{ t }}</button>
          </div>

          <svg class="chart" viewBox="0 0 710 464" role="img" aria-label="標高グラフ">
            <defs>
              <linearGradient id="fill" x1="0" y1="0" x2="0" y2="1"><stop offset="0" stop-color="#999" /><stop offset="1" stop-color="#d3d3d3" /></linearGradient>
            </defs>
            <path :d="area" fill="url(#fill)" />
            <g stroke="#000" stroke-opacity=".1" stroke-width="1.200">
              <path v-for="m in yTicks" :key="m" :d="`M69 ${py(m)}H693`" />
              <path v-for="i in 6" :key="i" :d="`M${px((i - 1) * 0.8)} 51V375`" />
            </g>
            <path d="M69 375H693" stroke="#aaa" />
            <g class="y-axis">
              <text v-for="m in yTicks" :key="m" x="54" :y="py(m) + 6">{{ m }}</text>
              <text x="54" y="380">m</text>
            </g>
            <g class="x-axis">
              <text x="69" y="407">km</text>
              <text v-for="(k, i) in xTicks" :key="k" :x="px((i + 1) * 0.8)" y="407">{{ k }}</text>
            </g>
            <path d="M652 60V375" stroke="#cc0620" stroke-width="2.600" />
            <circle cx="652" cy="266" r="12" fill="#d0021b" stroke="#fff" stroke-width="2.500" />
            <rect x="520" y="10" width="263" height="40" rx="4" />
            <path d="M642 49H662L652 65Z" />
            <g class="tip">
              <text x="570" y="41">2235</text><text x="630" y="41" class="u">m</text>
              <text x="673" y="41">3.7</text><text x="712" y="41" class="u">km</text>
            </g>
          </svg>

          <div class="row mountain">
            <svg viewBox="0 0 38 24" class="row-icon" aria-hidden="true"><path d="M1 22L14 2Q15 0 16.500 2L22 10L24 6Q25 5 26 6L37 21V22Z" fill="#757575" stroke="#757575" stroke-linejoin="round" /></svg>
            <span class="row-label">山の情報</span>
            <span class="links"><a href="#kita">北横岳（長野県）</a><span>・</span><a href="#minami">北横岳（南峰）</a></span>
          </div>
          <div class="row tag-row">
            <div class="tag-label">
              <svg viewBox="0 0 38 30" class="row-icon" aria-hidden="true"><path d="M6 4Q6 2 8 2H16L32 16Q33 17 32 18L23 28Q22 29 21 28L7 15Q6 14 6 12ZM11.500 5.200A2.200 2.200 0 1 0 11.600 5.200Z" fill="#757575" fill-rule="evenodd" /></svg>
              <span class="row-label">タグ</span>
            </div>
            <div class="tags"><a v-for="t in tags" :key="t" href="#tag">{{ t }}</a></div>
          </div>
        </section>
      </div>
    </main>

    <footer class="desk" aria-hidden="true">
      <div class="window-edge">
        <svg viewBox="0 0 48 13" width="48" height="13">
          <path d="M3 1H7V6H3ZM9 2H12M14 2H18M9 6H12M14 6H18" fill="none" stroke="#777" />
          <rect x="22.500" y="-2" width="21" height="14" fill="#b9e2f3" stroke="#3a9cc4" />
          <rect x="27" y="-1" width="12" height="8" fill="#fff" stroke="#678" /><rect x="29" y="1" width="8" height="4" fill="#3d7390" />
        </svg>
      </div>
    </footer>
  </div>
</template>

<style>
body {
  margin: 0;
  background: #fff;
}
</style>

<style scoped>
.page {
  min-height: 100vh;
  overflow: hidden;
  display: flex;
  flex-direction: column;
  background: #fefefe;
  color: #000;
  font-family: 'Open Sans', 'Noto Sans CJK JP', sans-serif;
  font-feature-settings: 'palt';
}
.topbar {
  height: 4px;
  background: #f5f5f5;
  border-bottom: 1px solid #bbb;
}
.content {
  padding: 0 98px 0 48px;
}
h1 {
  margin: 0;
  height: 56px;
  font: 700 44px/52px 'Noto Sans CJK JP', sans-serif;
}
.stats {
  margin: 0;
  padding-top: 35px;
  height: 142px;
  display: grid;
  grid-template-columns: repeat(5, 1fr);
}
.stat {
  text-align: center;
}
.stat dt {
  display: flex;
  justify-content: center;
  align-items: center;
  gap: 12px;
  height: 36px;
  font-size: 21px;
  font-weight: 300;
  line-height: 30px;
  color: #666;
}
.stat-icon {
  width: 26px;
  height: 26px;
}
.stat dd {
  margin: 11px 0 0;
  font: 700 50px/60px 'Liberation Sans', Arial, sans-serif;
}
.stat small {
  font: 400 28px 'Open Sans', sans-serif;
}
.columns {
  display: grid;
  grid-template-columns: 630fr 710fr;
  gap: 80px;
}
.map {
  position: relative;
  align-self: start;
  overflow: hidden;
  border-radius: 12px 12px 0 0;
}
.map-canvas {
  display: block;
  width: 100%;
}
.thin {
  stroke: #d3ab58;
  stroke-width: 4px;
}
.bold {
  stroke: #c9a24a;
  stroke-width: 7px;
}
.trail {
  fill: none;
  stroke: #666;
  stroke-width: 7px;
}
.contour-label {
  font: italic 400 28px 'Liberation Sans', sans-serif;
  fill: #c9a24a;
  stroke: #fff;
  stroke-width: 5px;
  paint-order: stroke;
}
.height-label {
  font: 400 25px 'DejaVu Sans', sans-serif;
}
.place {
  font: italic 500 34px 'Noto Sans CJK JP', sans-serif;
}
.place .big {
  font-size: 44px;
}
.hut {
  font: 500 28px 'Noto Sans CJK JP', sans-serif;
  text-anchor: middle;
}
.station {
  font: 500 32px 'Noto Sans CJK JP', sans-serif;
  fill: #08633f;
}
.pin-text text {
  font: 700 20px 'Liberation Sans', sans-serif;
  fill: #fff;
  text-anchor: middle;
}
.controls {
  position: absolute;
  left: 12px;
  top: 14px;
  display: flex;
  flex-direction: column;
  align-items: flex-start;
  gap: 12px;
}
.controls button {
  display: flex;
  align-items: center;
  justify-content: center;
  width: 50px;
  height: 50px;
  padding: 0;
  border: 1px solid #d4d4d4;
  border-radius: 4px;
  background: #fff;
  color: #1a1a1a;
}
.controls .wide {
  width: 86px;
  font: 500 13px 'Noto Sans CJK JP', sans-serif;
  font-feature-settings: 'palt';
}
.controls .on {
  background: #d0021b;
  border-color: #d0021b;
  color: #fff;
}
.controls svg {
  width: 26px;
  height: 26px;
}
.line {
  fill: none;
  stroke: currentColor;
  stroke-width: 2.600;
  stroke-linejoin: round;
}
.gauge {
  fill: none;
  stroke: currentColor;
  stroke-width: 3;
}
.gauge circle {
  fill: currentColor;
  stroke: none;
}
.pace {
  display: flex;
  align-items: center;
  box-sizing: border-box;
  height: 116px;
  padding: 0 30px 0 34px;
  border-radius: 12px;
  background: #efefef;
}
.pace .gauge {
  width: 32px;
  height: 32px;
}
.pace-name {
  margin-left: 9px;
  font-size: 23px;
  font-weight: 300;
}
.pace-note {
  margin-left: auto;
  margin-right: 10px;
  font-size: 17px;
  font-weight: 300;
  color: #666;
}
.pace-value {
  font-size: 33px;
  font-weight: 600;
}
.pace-value i {
  margin: 0 2px;
  font-style: normal;
  font-size: 24px;
  font-weight: 400;
}
.pace-value small {
  margin-left: 5px;
  font-size: 18px;
  font-weight: 400;
}
.tabs {
  margin: 70px 0 0 68px;
  display: flex;
  justify-content: space-between;
}
.tabs button {
  width: 150px;
  height: 50px;
  padding: 0 0 3px;
  border: 0;
  border-radius: 25px;
  background: transparent;
  color: #000;
  font: 300 24px 'Noto Sans CJK JP', sans-serif;
}
.tabs .selected {
  background: #000;
  color: #fff;
}
.chart {
  display: block;
  width: 100%;
  overflow: visible;
}
.chart text {
  font: 400 20px 'Liberation Sans', Arial, sans-serif;
  fill: #777;
}
.chart .y-axis text {
  text-anchor: end;
}
.chart .x-axis text {
  text-anchor: middle;
}
.chart .tip text {
  font: 600 24px 'Open Sans', sans-serif;
  fill: #fff;
}
.chart .tip .u {
  font-size: 14px;
  font-weight: 400;
}
.row {
  display: flex;
  padding: 0 10px;
}
.mountain {
  height: 79px;
  align-items: center;
  border-bottom: 1px solid #d6d6d6;
}
.row-icon {
  width: 38px;
  flex: none;
}
.row-label {
  margin-left: 12px;
  font-size: 17px;
  font-weight: 300;
  color: #666;
}
.links {
  margin-left: auto;
  font-family: 'Noto Sans CJK JP', sans-serif;
  font-size: 19px;
  font-feature-settings: normal;
  text-spacing-trim: space-all;
}
.links span {
  font-feature-settings: 'palt';
}
.links a {
  color: #2a688f;
  text-decoration: none;
}
.tag-row {
  padding-top: 20px;
  justify-content: space-between;
}
.tag-label {
  display: flex;
  align-items: center;
  align-self: flex-end;
  margin-bottom: 58px;
}
.tags {
  display: flex;
  flex-wrap: wrap;
  justify-content: flex-end;
  gap: 10px;
  width: 512px;
}
.tags a {
  height: 42px;
  padding: 0 10px;
  border-radius: 4px;
  background: #c3c3c3;
  color: #fff;
  font-size: 19px;
  line-height: 42px;
  text-decoration: none;
  white-space: nowrap;
}
.desk {
  position: relative;
  flex: none;
  height: 19px;
  margin-top: auto;
  box-shadow: 0 -2px 10px rgb(0 0 0 / 30%);
  background:
    linear-gradient(90deg, #3782b4 0 10%, transparent 10%),
    repeating-linear-gradient(64deg, rgb(0 0 0 / 35%) 0 5px, transparent 9px 17px, rgb(150 140 120 / 25%) 21px 24px, transparent 29px 37px),
    repeating-linear-gradient(118deg, rgb(0 0 0 / 30%) 0 7px, transparent 12px 31px),
    linear-gradient(90deg, #15171a 0 50%, #a08d72 53%, #8d7a62 59%, #3a3731 62%, #5e584f 68%, #35322d 74%, #5a554c 80%, #33302b 86%, #555047 92%, #3a3731);
}
.window-edge {
  display: flex;
  justify-content: flex-end;
  box-sizing: border-box;
  width: 53%;
  height: 13px;
  background: linear-gradient(#d2d2d2, #f0f0f0);
  border-top: 1px solid #555;
}
</style>
